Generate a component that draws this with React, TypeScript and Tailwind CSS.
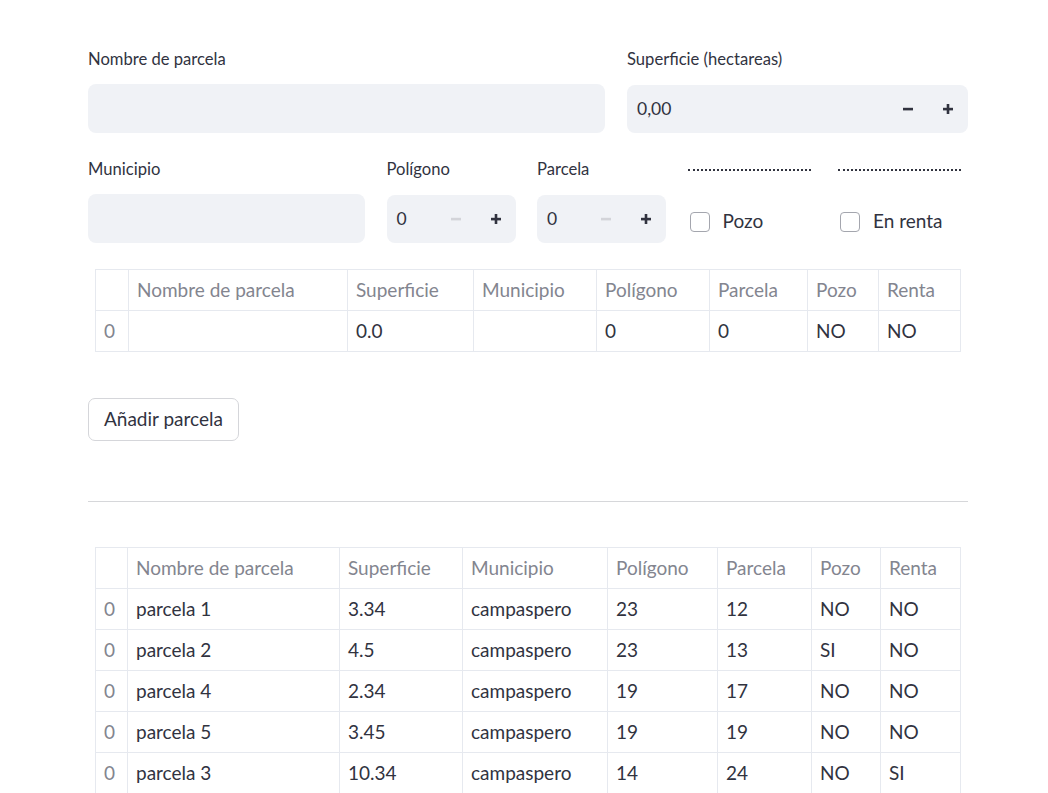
import React from "react";

const FONT = "font-['Lato','Noto_Sans',sans-serif]";

function Label({ children }: { children: React.ReactNode }) {
  return (
    <div className="flex h-[30px] items-center text-[16.6px] text-[#31333f]">
      {children}
    </div>
  );
}

function Minus({ disabled }: { disabled?: boolean }) {
  return (
    <svg width="12" height="12" viewBox="0 0 12 12">
      <rect x="1" y="4.8" width="10" height="2.6" fill={disabled ? "#d3d4d9" : "#31333f"} />
    </svg>
  );
}

function Plus() {
  return (
    <svg width="12" height="12" viewBox="0 0 12 12">
      <rect x="1" y="4.8" width="10" height="2.6" fill="#31333f" />
      <rect x="4.7" y="1" width="2.6" height="10" fill="#31333f" />
    </svg>
  );
}

function NumberInput({ value, minusDisabled }: { value: string; minusDisabled?: boolean }) {
  return (
    <div className="flex h-[48px] items-center rounded-[8px] bg-[#f0f2f6]">
      <span className="flex-1 pl-[10px] text-[17.5px] text-[#31333f]">{value}</span>
      <span className="flex h-full w-[40px] items-center justify-center">
        <Minus disabled={minusDisabled} />
      </span>
      <span className="flex h-full w-[40px] items-center justify-center">
        <Plus />
      </span>
    </div>
  );
}

function Checkbox({ label }: { label: string }) {
  return (
    <div className="flex h-[48px] items-center pl-[2px] pt-[7px]">
      <span className="h-[20px] w-[20px] rounded-[4px] border-[1.5px] border-[#a4a6ae] bg-white" />
      <span className="ml-[13px] text-[19px] text-[#31333f]">{label}</span>
    </div>
  );
}

function Dotted() {
  return (
    <div className="flex h-[30px] items-center">
      <div className="mt-[2px] w-[123px] border-t-2 border-dotted border-[#31333f]" />
    </div>
  );
}

type Row = string[];

function DataTable({ widths, head, rows }: { widths: number[]; head: string[]; rows: Row[] }) {
  return (
    <table className="ml-[7px] w-[865px] table-fixed border-collapse text-[19px]">
      <colgroup>
        {widths.map((w, i) => (
          <col key={i} style={{ width: w }} />
        ))}
      </colgroup>
      <thead>
        <tr className="h-[41px]">
          <th className="border border-[#e6e9ef]" />
          {head.map((h) => (
            <th
              key={h}
              className="border border-[#e6e9ef] px-[8px] text-left font-normal text-[#83858f]"
            >
              {h}
            </th>
          ))}
        </tr>
      </thead>
      <tbody>
        {rows.map((r, i) => (
          <tr key={i} className="h-[41px]">
            <td className="border border-[#e6e9ef] px-[8px] text-[#83858f]">0</td>
            {r.map((c, j) => (
              <td key={j} className="border border-[#e6e9ef] px-[8px] text-[#31333f]">
                {c}
              </td>
            ))}
          </tr>
        ))}
      </tbody>
    </table>
  );
}

const HEAD = ["Nombre de parcela", "Superficie", "Municipio", "Polígono", "Parcela", "Pozo", "Renta"];

export default function App() {
  return (
    <div className={`h-[793px] w-[1048px] overflow-hidden bg-white ${FONT}`}>
      <div className="ml-[88px] w-[880px] pt-[44px]">
        <div className="grid grid-cols-[517px_1fr] gap-x-[22px]">
          <div>
            <Label>Nombre de parcela</Label>
            <div className="mt-[10px] h-[49px] rounded-[8px] bg-[#f0f2f6]" />
          </div>
          <div>
            <Label>Superficie (hectareas)</Label>
            <div className="mt-[11px]">
              <NumberInput value="0,00" />
            </div>
          </div>
        </div>

        <div className="mt-[21px] grid grid-cols-[277px_129px_129px_129px_129px] gap-x-[21.5px]">
          <div>
            <Label>Municipio</Label>
            <div className="mt-[10px] h-[49px] rounded-[8px] bg-[#f0f2f6]" />
          </div>
          <div>
            <Label>Polígono</Label>
            <div className="mt-[11px]">
              <NumberInput value="0" minusDisabled />
            </div>
          </div>
          <div>
            <Label>Parcela</Label>
            <div className="mt-[11px]">
              <NumberInput value="0" minusDisabled />
            </div>
          </div>
          <div>
            <Dotted />
            <div className="mt-[10px]">
              <Checkbox label="Pozo" />
            </div>
          </div>
          <div>
            <Dotted />
            <div className="mt-[10px]">
              <Checkbox label="En renta" />
            </div>
          </div>
        </div>

        <div className="mt-[26px]">
          <DataTable
            widths={[33, 219, 126, 123, 113, 98, 71, 82]}
            head={HEAD}
            rows={[["", "0.0", "", "0", "0", "NO", "NO"]]}
          />
        </div>

        <button className="mt-[46px] flex h-[43px] items-center rounded-[7px] border border-[#d5d6da] bg-white px-[15px] text-[19px] text-[#31333f]">
          Añadir parcela
        </button>

        <hr className="mt-[60px] border-t border-[#d6d7da]" />

        <div className="mt-[45px]">
          <DataTable
            widths={[32, 212, 123, 145, 110, 94, 69, 80]}
            head={HEAD}
            rows={[
              ["parcela 1", "3.34", "campaspero", "23", "12", "NO", "NO"],
              ["parcela 2", "4.5", "campaspero", "23", "13", "SI", "NO"],
              ["parcela 4", "2.34", "campaspero", "19", "17", "NO", "NO"],
              ["parcela 5", "3.45", "campaspero", "19", "19", "NO", "NO"],
              ["parcela 3", "10.34", "campaspero", "14", "24", "NO", "SI"],
            ]}
          />
        </div>
      </div>
    </div>
  );
}
